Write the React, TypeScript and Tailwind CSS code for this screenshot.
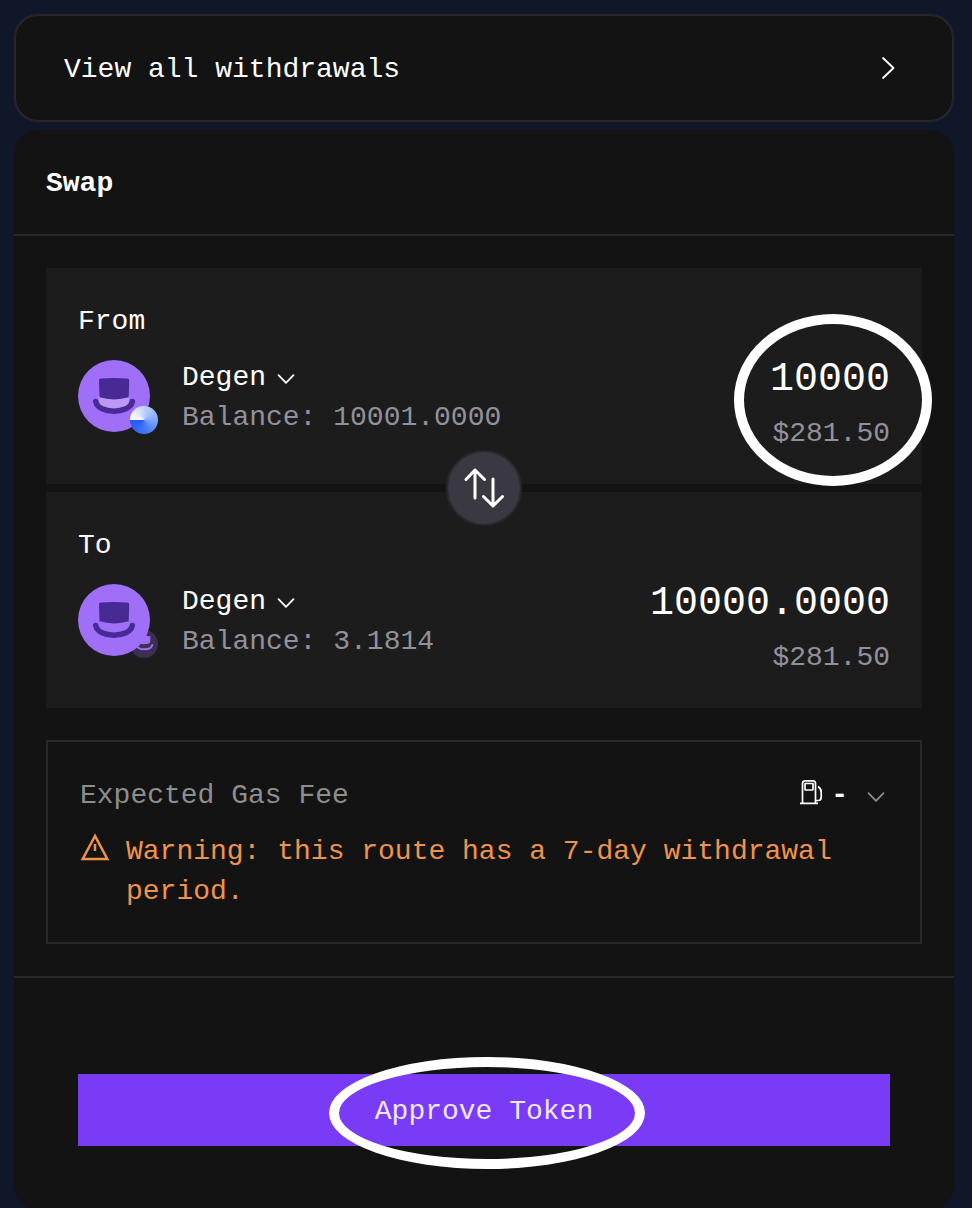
import type { ReactNode } from "react";

function Chevron({ className }: { className?: string }) {
  return (
    <svg width="18" height="12" viewBox="0 0 18 12" fill="none" stroke="currentColor" strokeWidth="1.8" strokeLinecap="round" strokeLinejoin="round" className={className}>
      <path d="M1.500 2.200L9 9.800l7.500-7.600" />
    </svg>
  );
}

function HatToken({ soft = false }: { soft?: boolean }) {
  return (
    <svg width="72" height="72" viewBox="0 0 72 72">
      <circle cx="36" cy="36" r="36" fill="#a06ff8" />
      {!soft && <path d="M20.500 36Q36 41 51.500 36L50.500 44.500Q36 54 21.500 44.500Z" fill="#ba99f7" />}
      <path d="M22.500 18.500Q36 17.500 49.500 18.500Q51.300 18.700 51.200 20.500L50.700 37.300Q36 41.500 21.500 37.300L21 20.500Q20.800 18.700 22.500 18.500Z" fill="#482a94" />
      <path d="M17.700 41.500C20 54.500 52 54.500 54.300 41.500" fill="none" stroke="#482a94" strokeWidth="5.500" strokeLinecap="round" />
    </svg>
  );
}

function DegenChainBadge() {
  return (
    <svg width="28" height="28" viewBox="0 0 28 28">
      <circle cx="14" cy="14" r="14" fill="#9b6df5" fillOpacity="0.24" />
      <path d="M7 6Q14 5 20.500 6.500L20 13Q14 15.500 8 13Z" fill="#a06ff8" />
      <path d="M6.500 15C8 20.800 21 20.800 22.300 15" fill="none" stroke="#a06ff8" strokeWidth="2" strokeLinecap="round" />
    </svg>
  );
}

type TokenPanelProps = {
  label: string;
  balance: string;
  amount: string;
  soft?: boolean;
  badge: ReactNode;
};

function TokenPanel({ label, balance, amount, soft, badge }: TokenPanelProps) {
  return (
    <section className="flex h-[216px] justify-between bg-[#1c1c1c] px-8">
      <div className="pt-[34px]">
        <div>{label}</div>
        <div className="mt-4 flex gap-8">
          <div className="relative mt-0.5 h-[72px] w-[72px]">
            <HatToken soft={soft} />
            <div className="absolute -right-2 -bottom-0.5 h-7 w-7">{badge}</div>
          </div>
          <div>
            <div className="flex items-center gap-[11px]">
              <span>Degen</span>
              <Chevron className="mt-0.5" />
            </div>
            <div className="text-[#92919b]">Balance: {balance}</div>
          </div>
        </div>
      </div>
      <div className="pt-[92px] text-right">
        <div className="text-[40px] leading-10">{amount}</div>
        <div className="mt-[14px] text-[#92919b]">$281.50</div>
      </div>
    </section>
  );
}

export default function App() {
  return (
    <main className="h-[1208px] w-[972px] overflow-hidden bg-[#101729] pt-3.5 pl-3.5 font-['Liberation_Mono',monospace] text-[28px] leading-10 text-white">
      <button className="flex h-[108px] w-[940px] items-center justify-between rounded-[24px] border-2 border-[#29262b] bg-[#131313] pr-[56px] pl-12 text-left">
        <span className="pt-1">View all withdrawals</span>
        <svg width="16" height="24" viewBox="0 0 16 24" fill="none" stroke="white" strokeWidth="1.8" strokeLinecap="round" strokeLinejoin="round">
          <path d="M3 2l10.500 10L3 22" />
        </svg>
      </button>

      <div className="mt-2 h-[1080px] w-[940px] rounded-[24px] bg-[#131313]">
        <header className="h-[106px] border-b-2 border-[#29262b] pt-[34px] pl-8 font-bold">Swap</header>

        <div className="relative flex flex-col gap-2 px-8 pt-8">
          <TokenPanel
            label="From"
            balance="10001.0000"
            amount="10000"
            badge={<div className="h-7 w-7 rounded-full bg-[conic-gradient(from_270deg,#ffffff,#8fb0fa_45%,#4a7bf7_70%,#2457f5)]" />}
          />
          <TokenPanel label="To" balance="3.1814" amount="10000.0000" soft badge={<DegenChainBadge />} />
          <button className="absolute top-[214px] left-[432px] flex h-[76px] w-[76px] items-center justify-center rounded-full border-2 border-[#29282e] bg-[#3a3841]">
            <svg width="40" height="40" viewBox="0 0 40 40" fill="none" stroke="white" strokeWidth="3" strokeLinecap="round" strokeLinejoin="round">
              <path d="M11 30V2M2 11.500L11 2l9.500 9.500M29 11v27M19.500 28.500L29 38l9.500-9.500" />
            </svg>
          </button>
          <div className="pointer-events-none absolute top-[78px] left-[720px] h-[172px] w-[198px] rounded-[50%] border-[10px] border-white" />
        </div>

        <section className="mx-8 mt-8 h-[204px] border-2 border-[#29282e] px-8 pt-[34px]">
          <div className="flex justify-between">
            <span className="text-[#8e8e8e]">Expected Gas Fee</span>
            <div className="flex items-start">
              <svg width="24" height="26" viewBox="0 0 24 26" fill="none" stroke="white" strokeWidth="1.7" className="mt-[3px]">
                <path d="M2.500 24.500V4.500Q2.500 1.800 5 1.800H13Q15.500 1.800 15.500 4.500V24.500M0 24.300H18" />
                <rect x="5" y="4.500" width="8" height="6.500" rx="0.5" />
                <path d="M18 7.500Q21.200 9.500 21.200 13V18Q21.200 21.500 18.500 21.500H16" />
              </svg>
              <span className="ml-[7px] font-bold leading-[40px]">-</span>
              <Chevron className="mt-[15px] mr-[3px] ml-[19px] text-[#8e8e8e]" />
            </div>
          </div>
          <div className="mt-4 flex gap-4 text-[#f0934a]">
            <svg width="30" height="28" viewBox="0 0 30 28" fill="none" stroke="currentColor" strokeWidth="2.500" strokeLinejoin="miter" className="mt-px shrink-0">
              <path d="M15 3L2.700 26H27.300ZM15 11v7" />
            </svg>
            <p className="w-[730px]">Warning: this route has a 7-day withdrawal period.</p>
          </div>
        </section>

        <footer className="relative mt-8 border-t-2 border-[#29262b] px-16 pt-24">
          <button className="flex h-[72px] w-full items-center justify-center bg-[#793bf5] pt-1 text-[#efe8ff]">Approve Token</button>
          <div className="pointer-events-none absolute top-[79px] left-[315px] h-[112px] w-[316px] rounded-[50%] border-[10px] border-white" />
        </footer>
      </div>
    </main>
  );
}
